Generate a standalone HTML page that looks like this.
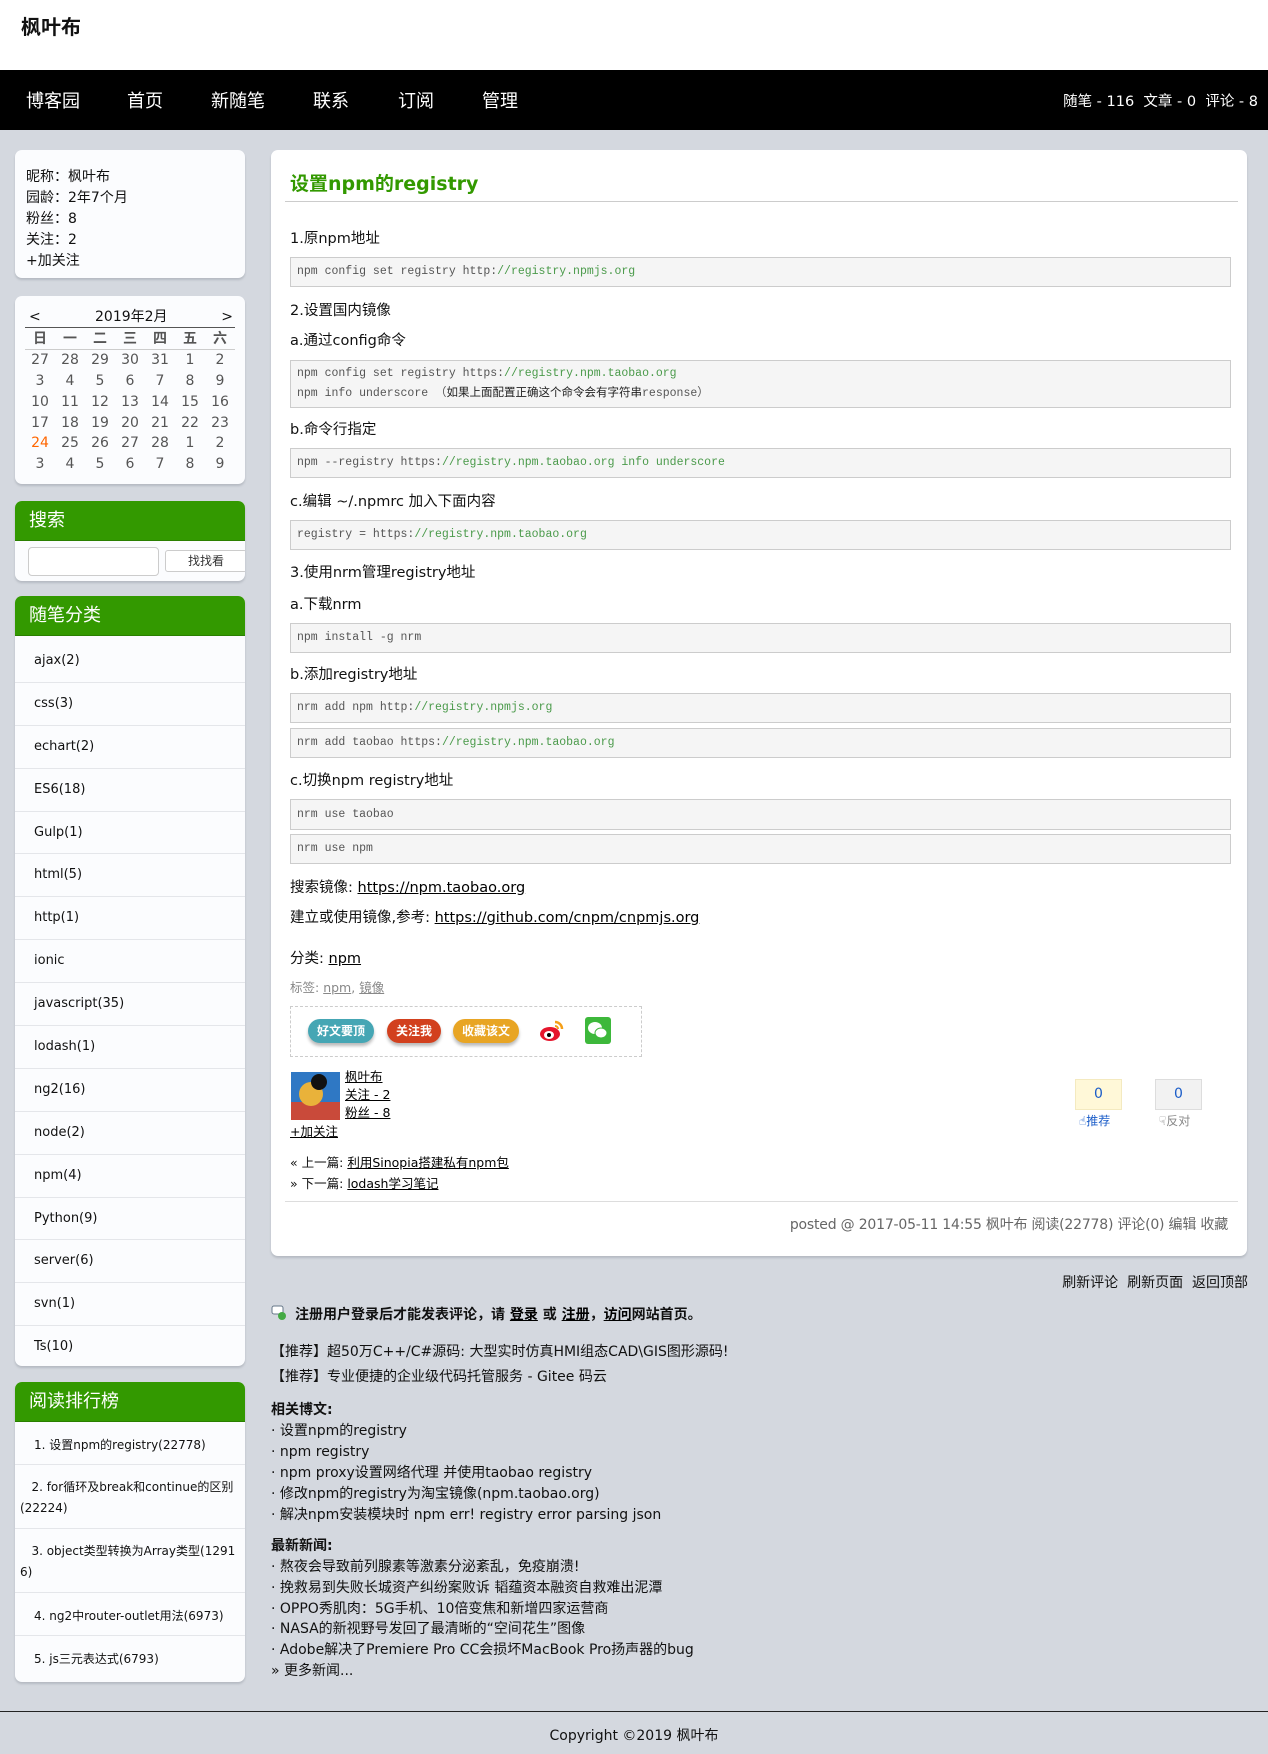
<!DOCTYPE html>
<html><head><meta charset="utf-8">
<style>
*{margin:0;padding:0;box-sizing:border-box}
body{width:1268px;height:1754px;background:#d4d8df;font-family:"DejaVu Sans","Noto Sans CJK SC",sans-serif;font-size:14px;color:#111;position:relative;overflow:hidden}
.a{position:absolute;white-space:nowrap;line-height:20px}
#top{position:absolute;left:0;top:0;width:1268px;height:70px;background:#fff}
#nav{position:absolute;left:0;top:70px;width:1268px;height:60px;background:#000;color:#fff}
#nav .a{font-size:18px;top:22px}
.box{position:absolute;background:#fbfcfe;border-radius:7px;box-shadow:0 2px 2px #b5bac2;overflow:hidden}
.hd{background:#339900;color:#fff;font-size:18px;height:40px;line-height:40px;padding-left:14px;border-bottom:1px solid #2a7f00}
.cat{height:42.9px;line-height:42px;padding-left:19px;font-size:13px;border-bottom:1px solid #e4e6ea}
.cal td{width:30px;text-align:center;color:#555;font-size:14px;height:20.8px;line-height:20px}
.code{position:absolute;left:290px;width:941px;background:#f5f5f5;border:1px solid #ccc;font-family:"Liberation Mono","Noto Sans CJK SC",monospace;font-size:11.5px;color:#555;padding-left:6px;line-height:18px}
.g{color:#4a9a4a}
.t{position:absolute;left:290px;font-size:14.5px;line-height:20px;white-space:nowrap}
a{color:#000}
.btn{position:absolute;top:1019px;height:24px;border-radius:12px;color:#fff;font-size:12px;font-weight:bold;text-align:center;line-height:24px;box-shadow:0 3px 3px #bbb}
.rk{white-space:nowrap;border-bottom:1px solid #e4e6ea}
</style></head><body>
<div id="top"><div class="a" style="left:21px;top:14px;font-size:20px;font-weight:bold;line-height:26px">枫叶布</div></div>
<div id="nav">
<div class="a" style="left:26px">博客园</div><div class="a" style="left:127px">首页</div><div class="a" style="left:211px">新随笔</div><div class="a" style="left:313px">联系</div><div class="a" style="left:398px">订阅</div><div class="a" style="left:482px">管理</div>
<div class="a" style="right:10px;top:22px;font-size:14.5px">随笔 - 116&nbsp; 文章 - 0&nbsp; 评论 - 8</div>
</div>

<div class="box" style="left:15px;top:150px;width:230px;height:128px">
<div class="a" style="left:11px;top:17px">昵称：枫叶布</div>
<div class="a" style="left:11px;top:38px">园龄：2年7个月</div>
<div class="a" style="left:11px;top:59px">粉丝：8</div>
<div class="a" style="left:11px;top:80px">关注：2</div>
<div class="a" style="left:11px;top:101px">+加关注</div>
</div>

<div class="box" style="left:15px;top:296px;width:230px;height:188px">
<div style="position:absolute;left:10px;top:10px;width:210px;border-bottom:1px solid #555;height:22px;font-size:14px;line-height:22px">
<span style="position:absolute;left:4px">&lt;</span><span style="position:absolute;left:70px">2019年2月</span><span style="position:absolute;right:2px">&gt;</span></div>
<table class="cal" style="position:absolute;left:10px;top:33px;border-collapse:collapse">
<tr style="border-bottom:1px solid #ccc"><td><b>日</b></td><td><b>一</b></td><td><b>二</b></td><td><b>三</b></td><td><b>四</b></td><td><b>五</b></td><td><b>六</b></td></tr>
<tr><td>27</td><td>28</td><td>29</td><td>30</td><td>31</td><td>1</td><td>2</td></tr>
<tr><td>3</td><td>4</td><td>5</td><td>6</td><td>7</td><td>8</td><td>9</td></tr>
<tr><td>10</td><td>11</td><td>12</td><td>13</td><td>14</td><td>15</td><td>16</td></tr>
<tr><td>17</td><td>18</td><td>19</td><td>20</td><td>21</td><td>22</td><td>23</td></tr>
<tr><td style="color:#f60">24</td><td>25</td><td>26</td><td>27</td><td>28</td><td>1</td><td>2</td></tr>
<tr><td>3</td><td>4</td><td>5</td><td>6</td><td>7</td><td>8</td><td>9</td></tr>
</table>
</div>

<div class="box" style="left:15px;top:501px;width:230px;height:80px">
<div class="hd">搜索</div>
<div style="position:absolute;left:13px;top:46px;width:131px;height:29px;border:1px solid #ccc;border-radius:4px;background:#fff"></div>
<div style="position:absolute;left:150px;top:49px;width:82px;height:22px;border:1px solid #ccc;border-radius:3px;background:#fff;font-size:12px;text-align:center;line-height:20px;color:#333">找找看</div>
</div>

<div class="box" style="left:15px;top:596px;width:230px;height:770px">
<div class="hd">随笔分类</div>
<div style="padding-top:4px">
<div class="cat">ajax(2)</div><div class="cat">css(3)</div><div class="cat">echart(2)</div><div class="cat">ES6(18)</div><div class="cat">Gulp(1)</div><div class="cat">html(5)</div><div class="cat">http(1)</div><div class="cat">ionic</div><div class="cat">javascript(35)</div><div class="cat">lodash(1)</div><div class="cat">ng2(16)</div><div class="cat">node(2)</div><div class="cat">npm(4)</div><div class="cat">Python(9)</div><div class="cat">server(6)</div><div class="cat">svn(1)</div><div class="cat" style="border:0">Ts(10)</div>
</div></div>

<div class="box" style="left:15px;top:1382px;width:230px;height:300px;font-size:12px">
<div class="hd">阅读排行榜</div>
<div class="rk" style="height:43px;line-height:46px;padding-left:19px">1. 设置npm的registry(22778)</div>
<div class="rk" style="height:64px;line-height:21px;padding:12px 0 0 5px">&nbsp;&nbsp;&nbsp;2. for循环及break和continue的区别<br>(22224)</div>
<div class="rk" style="height:64px;line-height:21px;padding:12px 0 0 5px">&nbsp;&nbsp;&nbsp;3. object类型转换为Array类型(1291<br>6)</div>
<div class="rk" style="height:43px;line-height:46px;padding-left:19px">4. ng2中router-outlet用法(6973)</div>
<div class="rk" style="height:43px;line-height:46px;padding-left:19px;border:0">5. js三元表达式(6793)</div>
</div>

<div class="box" style="left:271px;top:150px;width:976px;height:1106px;background:#fff"></div>
<div class="a" style="left:290px;top:171px;font-size:19px;font-weight:bold;color:#339900;line-height:26px">设置npm的registry</div>
<div style="position:absolute;left:285px;top:201px;width:953px;border-top:1px solid #ccc"></div>

<div class="t" style="top:229px">1.原npm地址</div>
<div class="code" style="top:257px;height:30px;line-height:28px">npm config set registry http:<span class="g">//registry.npmjs.org</span></div>
<div class="t" style="top:301px">2.设置国内镜像</div>
<div class="t" style="top:331px">a.通过config命令</div>
<div class="code" style="top:360px;height:48px;padding-top:4px">npm config set registry https:<span class="g">//registry.npm.taobao.org</span><br>npm info underscore （<span style="font-family:'Noto Sans CJK SC';color:#222">如果上面配置正确这个命令会有字符串</span>response）</div>
<div class="t" style="top:420px">b.命令行指定</div>
<div class="code" style="top:448px;height:30px;line-height:28px">npm --registry https:<span class="g">//registry.npm.taobao.org info underscore</span></div>
<div class="t" style="top:492px">c.编辑 ~/.npmrc 加入下面内容</div>
<div class="code" style="top:520px;height:30px;line-height:28px">registry = https:<span class="g">//registry.npm.taobao.org</span></div>
<div class="t" style="top:563px">3.使用nrm管理registry地址</div>
<div class="t" style="top:595px">a.下载nrm</div>
<div class="code" style="top:623px;height:30px;line-height:28px">npm install -g nrm</div>
<div class="t" style="top:665px">b.添加registry地址</div>
<div class="code" style="top:693px;height:30px;line-height:28px">nrm add npm http:<span class="g">//registry.npmjs.org</span></div>
<div class="code" style="top:728px;height:30px;line-height:28px">nrm add taobao https:<span class="g">//registry.npm.taobao.org</span></div>
<div class="t" style="top:771px">c.切换npm registry地址</div>
<div class="code" style="top:799px;height:31px;line-height:29px">nrm use taobao</div>
<div class="code" style="top:834px;height:30px;line-height:28px">nrm use npm</div>
<div class="t" style="top:878px">搜索镜像: <a href="#">https://npm.taobao.org</a></div>
<div class="t" style="top:908px">建立或使用镜像,参考: <a href="#">https://github.com/cnpm/cnpmjs.org</a></div>
<div class="t" style="top:949px">分类: <a href="#">npm</a></div>
<div class="t" style="top:978px;font-size:12.5px;color:#888">标签: <a href="#" style="color:#888">npm</a>, <a href="#" style="color:#888">镜像</a></div>

<div style="position:absolute;left:290px;top:1006px;width:352px;height:51px;border:1px dashed #ccc"></div>
<div class="btn" style="left:308px;width:66px;background:#45a6b4">好文要顶</div>
<div class="btn" style="left:387px;width:54px;background:#d2401e">关注我</div>
<div class="btn" style="left:453px;width:66px;background:#e8a524">收藏该文</div>
<svg style="position:absolute;left:538px;top:1017px" width="28" height="28" viewBox="0 0 28 28"><ellipse cx="12" cy="17" rx="10" ry="7" fill="#e6162d"/><ellipse cx="11" cy="18" rx="5" ry="4" fill="#fff"/><circle cx="11" cy="18" r="2" fill="#000"/><path d="M17 5a7 7 0 0 1 7 7" stroke="#f59f18" stroke-width="2.5" fill="none"/><path d="M17 9a3 3 0 0 1 3 3" stroke="#f59f18" stroke-width="2" fill="none"/></svg>
<svg style="position:absolute;left:585px;top:1017px" width="26" height="27" viewBox="0 0 26 27"><rect width="26" height="27" rx="3" fill="#3db83b"/><ellipse cx="10" cy="11" rx="7" ry="6" fill="#fff"/><ellipse cx="16" cy="16" rx="6" ry="5" fill="#fff" stroke="#3db83b"/></svg>

<svg style="position:absolute;left:291px;top:1072px" width="49" height="48"><rect width="49" height="48" fill="#2f78c4"/><rect y="30" width="49" height="18" fill="#c94a3a"/><circle cx="20" cy="22" r="12" fill="#e9b23a"/><circle cx="28" cy="10" r="8" fill="#111"/></svg>
<div class="a" style="left:345px;top:1068px;font-size:12.5px;line-height:18px"><a href="#">枫叶布</a><br><a href="#">关注 - 2</a><br><a href="#">粉丝 - 8</a></div>
<div class="a" style="left:290px;top:1122px;font-size:12.5px"><a href="#">+加关注</a></div>
<div style="position:absolute;left:1075px;top:1079px;width:47px;height:31px;background:#fff8d8;border:1px solid #f4eac0;text-align:center;line-height:29px;color:#1a5cc8;font-size:14px">0</div>
<div class="a" style="left:1079px;top:1111px;font-size:12px;color:#1a5cc8">&#9757;推荐</div>
<div style="position:absolute;left:1155px;top:1079px;width:47px;height:31px;background:#f2f2f2;border:1px solid #ddd;text-align:center;line-height:29px;color:#1a5cc8;font-size:14px">0</div>
<div class="a" style="left:1159px;top:1111px;font-size:12px;color:#888">&#9759;反对</div>
<div class="a" style="left:290px;top:1153px;font-size:12.5px">« 上一篇: <a href="#">利用Sinopia搭建私有npm包</a></div>
<div class="a" style="left:290px;top:1174px;font-size:12.5px">» 下一篇: <a href="#">lodash学习笔记</a></div>
<div style="position:absolute;left:285px;top:1201px;width:953px;border-top:1px solid #ddd"></div>
<div class="a" style="right:40px;top:1215px;font-size:14px;color:#666;letter-spacing:-0.2px">posted @ 2017-05-11 14:55 枫叶布 阅读(22778) 评论(0) 编辑 收藏</div>

<div class="a" style="right:20px;top:1273px;font-size:14px">刷新评论&nbsp; 刷新页面&nbsp; 返回顶部</div>
<svg style="position:absolute;left:271px;top:1305px" width="16" height="16"><rect x="1" y="1" width="11" height="8" rx="2" fill="#fff" stroke="#678"/><circle cx="11" cy="11" r="4" fill="#4a4"/></svg>
<div class="a" style="left:295px;top:1305px;font-size:14px;font-weight:bold">注册用户登录后才能发表评论，请 <a href="#">登录</a> 或 <a href="#">注册</a>，<a href="#">访问</a>网站首页。</div>
<div class="a" style="left:271px;top:1342px;font-size:14px">【推荐】超50万C++/C#源码: 大型实时仿真HMI组态CAD\GIS图形源码!</div>
<div class="a" style="left:271px;top:1367px;font-size:14px">【推荐】专业便捷的企业级代码托管服务 - Gitee 码云</div>
<div class="a" style="left:271px;top:1400px;font-size:14px;font-weight:bold">相关博文:</div>
<div class="a" style="left:271px;top:1421px;font-size:14px;line-height:21px">· 设置npm的registry<br>· npm registry<br>· npm proxy设置网络代理 并使用taobao registry<br>· 修改npm的registry为淘宝镜像(npm.taobao.org)<br>· 解决npm安装模块时 npm err! registry error parsing json</div>
<div class="a" style="left:271px;top:1536px;font-size:14px;font-weight:bold">最新新闻:</div>
<div class="a" style="left:271px;top:1557px;font-size:14px;line-height:20.8px">· 熬夜会导致前列腺素等激素分泌紊乱，免疫崩溃!<br>· 挽救易到失败长城资产纠纷案败诉 韬蕴资本融资自救难出泥潭<br>· OPPO秀肌肉：5G手机、10倍变焦和新增四家运营商<br>· NASA的新视野号发回了最清晰的“空间花生”图像<br>· Adobe解决了Premiere Pro CC会损坏MacBook Pro扬声器的bug<br>» 更多新闻...</div>

<div style="position:absolute;left:0;top:1711px;width:1268px;border-top:1px solid #222"></div>
<div class="a" style="left:0;width:1268px;text-align:center;top:1726px;font-size:14px">Copyright ©2019 枫叶布</div>
</body></html>
